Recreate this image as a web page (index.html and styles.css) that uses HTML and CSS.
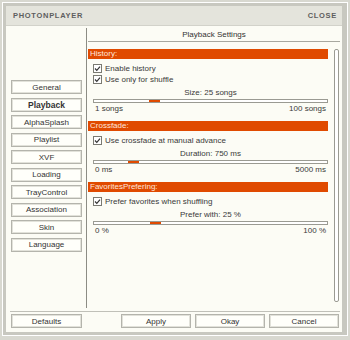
FILE: index.html
```html
<!DOCTYPE html>
<html>
<head>
<meta charset="utf-8">
<link rel="stylesheet" href="styles.css">
</head>
<body>
<div class="frame">
  <div class="window">
    <div class="titlebar">
      <span class="app-name">PHOTONPLAYER</span>
      <span class="close">CLOSE</span>
    </div>
    <div class="main">
      <div class="nav">
        <div class="btn">General</div>
        <div class="btn active">Playback</div>
        <div class="btn">AlphaSplash</div>
        <div class="btn">Playlist</div>
        <div class="btn">XVF</div>
        <div class="btn">Loading</div>
        <div class="btn">TrayControl</div>
        <div class="btn">Association</div>
        <div class="btn">Skin</div>
        <div class="btn">Language</div>
      </div>
      <div class="panel">
        <div class="panel-title">Playback Settings</div>
        <div class="panel-body">
          <div class="sections">
            <div class="section">
              <div class="sec-head">History:</div>
              <div class="checks">
                <div class="check"><span class="box"><svg viewBox="0 0 9 9" width="9" height="9"><path d="M2 4.5 L3.8 6.3 L7 2.6" fill="none" stroke="#333" stroke-width="1.2"/></svg></span>Enable history</div>
                <div class="check"><span class="box"><svg viewBox="0 0 9 9" width="9" height="9"><path d="M2 4.5 L3.8 6.3 L7 2.6" fill="none" stroke="#333" stroke-width="1.2"/></svg></span>Use only for shuffle</div>
              </div>
              <div class="slider-label">Size: 25 songs</div>
              <div class="track"><div class="thumb" style="left:54.9px"></div></div>
              <div class="range"><span>1 songs</span><span>100 songs</span></div>
            </div>
            <div class="section">
              <div class="sec-head">Crossfade:</div>
              <div class="checks">
                <div class="check"><span class="box"><svg viewBox="0 0 9 9" width="9" height="9"><path d="M2 4.5 L3.8 6.3 L7 2.6" fill="none" stroke="#333" stroke-width="1.2"/></svg></span>Use crossfade at manual advance</div>
              </div>
              <div class="slider-label">Duration: 750 ms</div>
              <div class="track"><div class="thumb" style="left:33.6px"></div></div>
              <div class="range"><span>0 ms</span><span>5000 ms</span></div>
            </div>
            <div class="section">
              <div class="sec-head">FavoritesPrefering:</div>
              <div class="checks">
                <div class="check"><span class="box"><svg viewBox="0 0 9 9" width="9" height="9"><path d="M2 4.5 L3.8 6.3 L7 2.6" fill="none" stroke="#333" stroke-width="1.2"/></svg></span>Prefer favorites when shuffling</div>
              </div>
              <div class="slider-label">Prefer with: 25 %</div>
              <div class="track"><div class="thumb" style="left:56px"></div></div>
              <div class="range"><span>0 %</span><span>100 %</span></div>
            </div>
          </div>
          <div class="scroll"></div>
        </div>
      </div>
    </div>
    <div class="footer">
      <div class="btn">Defaults</div>
      <div class="footer-right">
        <div class="btn wide">Apply</div>
        <div class="btn wide">Okay</div>
        <div class="btn wide">Cancel</div>
      </div>
    </div>
  </div>
</div>
</body>
</html>
```

FILE: styles.css
```css
* { box-sizing: border-box; }

body {
  margin: 0;
  background: #d8d8d0;
  font-family: "Liberation Sans", Arial, sans-serif;
  font-size: 8px;
  color: #3a3a3a;
}

.frame {
  margin: 2px 0 0 2px;
  width: 346px;
  height: 334px;
  border: 1px solid #ffffff;
  padding: 3px 5px 3px 3px;
  background: #c8c8c0;
}

.window {
  width: 336px;
  height: 326px;
  background: #fcfcf5;
  display: flex;
  flex-direction: column;
}

.titlebar {
  height: 20px;
  background: #e4e4dc;
  border-bottom: 1px solid #d2d2ca;
  display: flex;
  justify-content: space-between;
  align-items: center;
  padding: 0 5px 0 7px;
  font-weight: bold;
  font-size: 7.5px;
  letter-spacing: 0.7px;
  color: #5e5e5e;
}

.main {
  display: flex;
  margin-top: 2px;
  height: 280px;
}

.nav {
  width: 81px;
  border-right: 1px solid #8c8c84;
  padding: 52px 0 0 5px;
  display: flex;
  flex-direction: column;
  gap: 3.5px;
}

.btn {
  width: 71px;
  height: 14px;
  border: 1px solid #b4b4ac;
  box-shadow: inset 0 0 0 1px #e2e2da;
  background: #fffffa;
  display: flex;
  align-items: center;
  justify-content: center;
  color: #333;
}

.btn.active {
  font-weight: bold;
  font-size: 8.5px;
}

.btn.wide { width: 70px; }

.panel {
  margin-left: 1px;
  width: 252px;
}

.panel-title {
  height: 14px;
  border-bottom: 1px solid #a8a8a0;
  text-align: center;
  line-height: 13px;
  color: #333;
}

.panel-body {
  display: flex;
  padding-top: 7px;
}

.sections {
  width: 240px;
}

.scroll {
  margin-left: 6px;
  width: 5px;
  height: 253px;
  border: 1px solid #9a9a92;
  border-radius: 2px;
  background: #ffffff;
}

.section {
  margin-bottom: 6px;
}

.sec-head {
  height: 10px;
  background: #e04a00;
  color: #ffe6dc;
  line-height: 10px;
  padding-left: 2px;
}

.checks {
  padding: 4px 0 0 5px;
}

.check {
  height: 11px;
  display: flex;
  align-items: center;
  gap: 3px;
}

.box {
  width: 9px;
  height: 9px;
  border: 1px solid #7a7a72;
  background: #ffffff;
  display: flex;
  align-items: center;
  justify-content: center;
}

.box svg { display: block; flex: none; }

.slider-label {
  margin-top: 2px;
  height: 12px;
  line-height: 12px;
  text-align: center;
  padding-left: 5px;
}

.track {
  position: relative;
  margin-left: 5px;
  height: 4px;
  border: 1px solid #9a9a92;
  background: #ffffff;
}

.thumb {
  position: absolute;
  top: 0;
  width: 11px;
  height: 2px;
  background: #e04a00;
}

.range {
  display: flex;
  justify-content: space-between;
  height: 12px;
  line-height: 12px;
  padding: 0 2px 0 7px;
}

.footer {
  margin: 3px 2px 0 4px;
  border-top: 1px solid #c0c0b8;
  padding: 2px 0 0 1px;
  display: flex;
  justify-content: space-between;
}

.footer-right {
  display: flex;
  gap: 4px;
  margin-right: 1px;
}
```
